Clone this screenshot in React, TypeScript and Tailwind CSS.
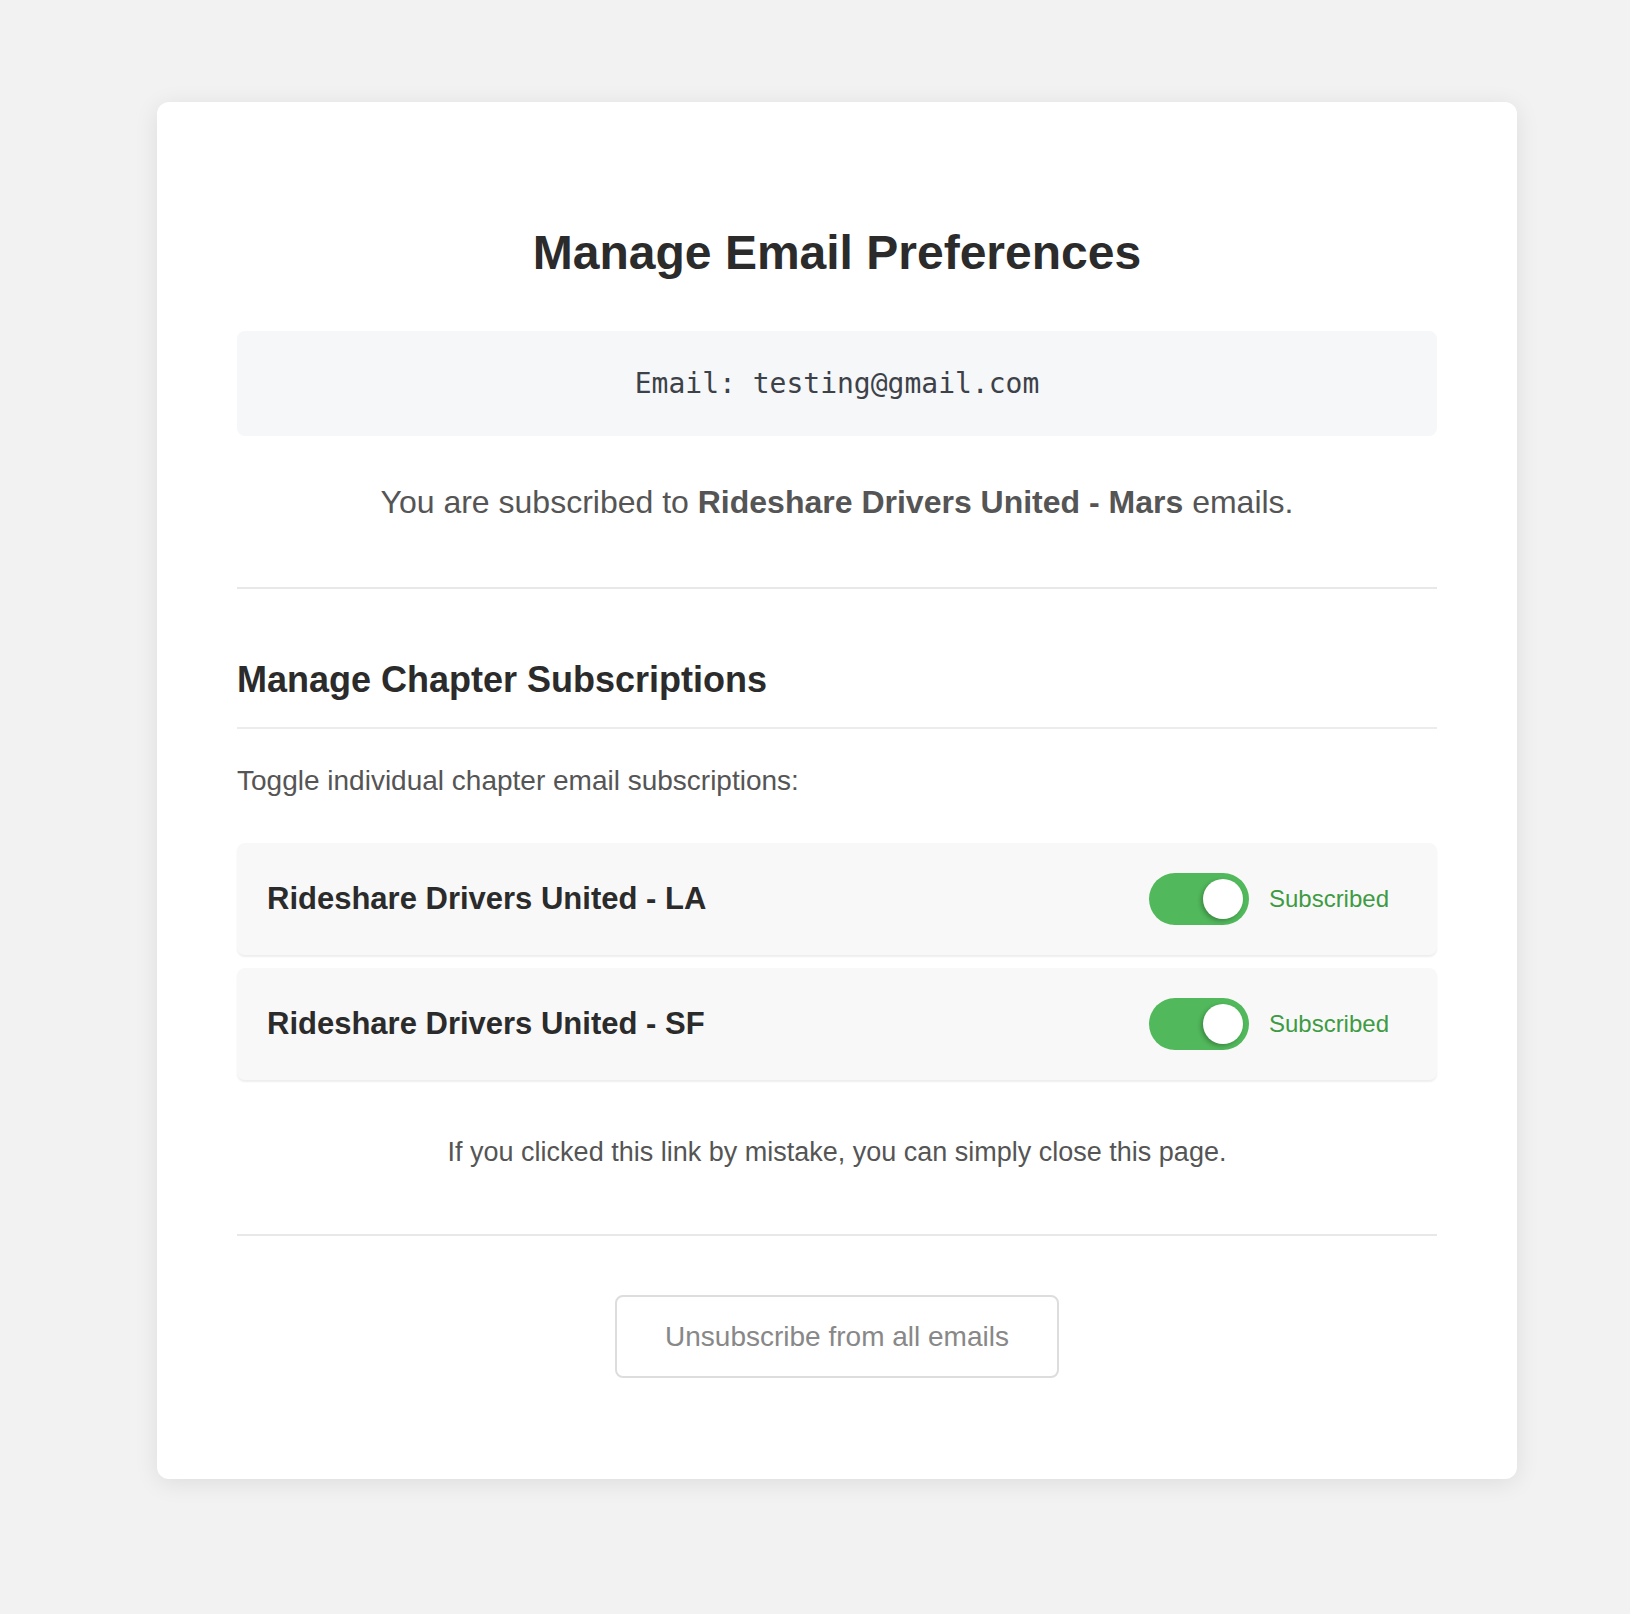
import { useState } from "react";

const chapters = [
  { id: "la", name: "Rideshare Drivers United - LA" },
  { id: "sf", name: "Rideshare Drivers United - SF" },
];

function Toggle({ on, onClick }: { on: boolean; onClick: () => void }) {
  return (
    <button
      type="button"
      onClick={onClick}
      className={
        "relative h-[52px] w-[100px] shrink-0 rounded-full transition-colors " +
        (on ? "bg-[#51b85b]" : "bg-[#cccccc]")
      }
    >
      <span
        className={
          "absolute top-[6px] h-[40px] w-[40px] rounded-full bg-white shadow-[-2px_2px_4px_rgba(0,0,0,0.25)] transition-all " +
          (on ? "left-[54px]" : "left-[6px]")
        }
      />
    </button>
  );
}

export default function App() {
  const [subs, setSubs] = useState<Record<string, boolean>>({ la: true, sf: true });

  return (
    <div className="min-h-[1614px] bg-[#f2f2f2] pt-[102px] pb-[135px] font-['Liberation_Sans',Arial,sans-serif]">
      <div className="ml-[157px] flex w-[1360px] flex-col rounded-[12px] bg-white px-20 pt-20 pb-[101px] shadow-[0_4px_24px_rgba(0,0,0,0.09)]">
        <h1 className="mt-[47px] text-center text-[48px] leading-none font-bold text-[#2b2b2b]">
          Manage Email Preferences
        </h1>

        <div className="mt-[54px] rounded-[8px] bg-[#f6f7f9] py-8 text-center font-['DejaVu_Sans_Mono',monospace] text-[28px] leading-[41px] text-[#3d4148]">
          Email: testing@gmail.com
        </div>

        <p className="mt-[42px] text-center text-[32px] leading-[48px] text-[#555555]">
          You are subscribed to <strong className="font-bold">Rideshare Drivers United - Mars</strong> emails.
        </p>

        <hr className="mt-[61px] border-0 border-t-2 border-[#e8e8e8]" />

        <h2 className="mt-[69px] text-[36px] leading-[43px] font-bold text-[#2b2b2b]">
          Manage Chapter Subscriptions
        </h2>

        <hr className="mt-[26px] border-0 border-t-2 border-[#ececec]" />

        <p className="mt-[31px] text-[28px] leading-[42px] text-[#555555]">
          Toggle individual chapter email subscriptions:
        </p>

        <div className="mt-[41px] flex flex-col gap-[13px]">
          {chapters.map((c) => (
            <div
              key={c.id}
              className="flex items-center justify-between rounded-[8px] bg-[#f8f8f8] py-[30px] pr-12 pl-[30px] shadow-[0_2px_2px_rgba(0,0,0,0.07)]"
            >
              <span className="text-[31px] leading-[40px] font-bold text-[#2b2b2b]">{c.name}</span>
              <div className="flex items-center gap-5">
                <Toggle
                  on={subs[c.id]}
                  onClick={() => setSubs((s) => ({ ...s, [c.id]: !s[c.id] }))}
                />
                <span
                  className={
                    "text-[24px] leading-[32px] " + (subs[c.id] ? "text-[#3e9b43]" : "text-[#888888]")
                  }
                >
                  {subs[c.id] ? "Subscribed" : "Unsubscribed"}
                </span>
              </div>
            </div>
          ))}
        </div>

        <p className="mt-[51px] text-center text-[27px] leading-[42px] text-[#555555]">
          If you clicked this link by mistake, you can simply close this page.
        </p>

        <hr className="mt-[61px] border-0 border-t-2 border-[#e8e8e8]" />

        <div className="mt-[59px] flex justify-center">
          <button
            type="button"
            className="h-[83px] rounded-[8px] border-2 border-[#dddddd] bg-white px-[48px] text-[28px] text-[#888888]"
          >
            Unsubscribe from all emails
          </button>
        </div>
      </div>
    </div>
  );
}
